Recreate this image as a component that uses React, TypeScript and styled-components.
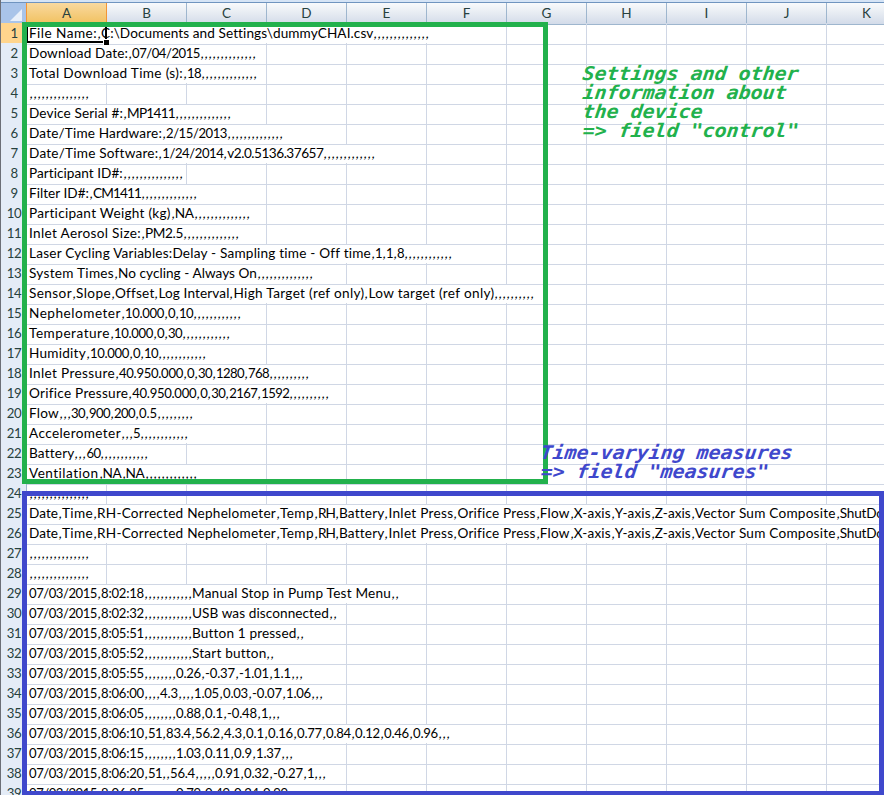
import React, { useLayoutEffect, useRef, useState } from 'react';
import styled, { createGlobalStyle } from 'styled-components';

const GlobalStyle = createGlobalStyle`
  html, body { margin: 0; padding: 0; overflow: hidden; background: #fff; }
`;

const COLUMNS = ['A', 'B', 'C', 'D', 'E', 'F', 'G', 'H', 'I', 'J', 'K'];
const COLUMN_WIDTH = 80;
const TEXT_INSET = 2;

type Token = { text: string; width: number };
type Part = string | [string, number];

const ADVANCE: Record<string, number> = { ',': 4, '.': 4, ':': 4, '/': 6, '-': 5 };

/* Plain strings hold digits and punctuation; words carry their own width. */
const toTokens = (parts: Part[]): Token[] =>
  parts.flatMap((part) => {
    if (typeof part !== 'string') return [{ text: part[0], width: part[1] }];
    return (part.match(/,+|[^,]+/g) ?? []).map((text) => ({
      text,
      width: [...text].reduce((sum, c) => sum + (ADVANCE[c] ?? 7), 0),
    }));
  });

const HEADINGS: Part[] = [
  ['Date', 29], ',', ['Time', 31], ',', ['RH-Corrected Nephelometer', 179], ',', ['Temp', 34], ',',
  ['RH', 17], ',', ['Battery', 45], ',', ['Inlet Press', 65], ',', ['Orifice Press', 78], ',',
  ['Flow', 30], ',', ['X-axis', 37], ',', ['Y-axis', 36], ',', ['Z-axis', 36], ',',
  ['Vector Sum Composite', 141], ',', ['ShutDown', 62],
];
const EMPTY_RECORD: Part[] = [',,,,,,,,,,,,,,,'];

const ROWS: Part[][] = [
  [['File Name:', 68], ',', ['C:\\Documents and Settings\\dummyCHAI.csv', 272], ',,,,,,,,,,,,,,'],
  [['Download Date:', 99], ',07/04/2015,,,,,,,,,,,,,,'],
  [['Total Download Time (s):', 154], ',18,,,,,,,,,,,,,,'],
  EMPTY_RECORD,
  [['Device Serial #:', 94], ',', ['MP1411', 48], ',,,,,,,,,,,,,,'],
  [['Date/Time Hardware:', 133], ',2/15/2013,,,,,,,,,,,,,,'],
  [['Date/Time Software:', 129], ',1/24/2014,', ['v2.0.5136.37657', 96], ',,,,,,,,,,,,,'],
  [['Participant ID#:', 94], ',,,,,,,,,,,,,,,'],
  [['Filter ID#:', 60], ',', ['CM1411', 48], ',,,,,,,,,,,,,,'],
  [['Participant Weight (kg)', 142], ',', ['NA', 19], ',,,,,,,,,,,,,,'],
  [['Inlet Aerosol Size:', 112], ',', ['PM2.5', 38], ',,,,,,,,,,,,,,'],
  [['Laser Cycling Variables:Delay - Sampling time - Off time', 342], ',1,1,8,,,,,,,,,,,,'],
  [['System Times', 85], ',', ['No cycling - Always On', 139], ',,,,,,,,,,,,,,'],
  [
    ['Sensor', 43], ',', ['Slope', 35], ',', ['Offset', 39], ',', ['Log Interval', 71], ',',
    ['High Target (ref only)', 131], ',', ['Low target (ref only)', 126], ',,,,,,,,,,',
  ],
  [['Nephelometer', 92], ',10.000,0,10,,,,,,,,,,,,'],
  [['Temperature', 81], ',10.000,0,30,,,,,,,,,,,,'],
  [['Humidity', 57], ',10.000,0,10,,,,,,,,,,,,'],
  [['Inlet Pressure', 86], ',40.950.000,0,30,1280,768,,,,,,,,,,'],
  [['Orifice Pressure', 99], ',40.950.000,0,30,2167,1592,,,,,,,,,,'],
  [['Flow', 30], ',,,30,900,200,0.5,,,,,,,,,'],
  [['Accelerometer', 92], ',,,5,,,,,,,,,,,,'],
  [['Battery', 45], ',,,60,,,,,,,,,,,,'],
  [['Ventilation', 70], ',', ['NA', 19], ',', ['NA', 19], ',,,,,,,,,,,,,'],
  EMPTY_RECORD,
  HEADINGS,
  HEADINGS,
  EMPTY_RECORD,
  EMPTY_RECORD,
  ['07/03/2015,8:02:18,,,,,,,,,,,,', ['Manual Stop in Pump Test Menu', 199], ',,'],
  ['07/03/2015,8:02:32,,,,,,,,,,,,', ['USB was disconnected', 137], ',,'],
  ['07/03/2015,8:05:51,,,,,,,,,,,,', ['Button 1 pressed', 104], ',,'],
  ['07/03/2015,8:05:52,,,,,,,,,,,,', ['Start button', 74], ',,'],
  ['07/03/2015,8:05:55,,,,,,,,0.26,-0.37,-1.01,1.1,,,'],
  ['07/03/2015,8:06:00,,,,4.3,,,,1.05,0.03,-0.07,1.06,,,'],
  ['07/03/2015,8:06:05,,,,,,,,0.88,0.1,-0.48,1,,,'],
  ['07/03/2015,8:06:10,51,83.4,56.2,4.3,0.1,0.16,0.77,0.84,0.12,0.46,0.96,,,'],
  ['07/03/2015,8:06:15,,,,,,,,1.03,0.11,0.9,1.37,,,'],
  ['07/03/2015,8:06:20,51,,56.4,,,,,0.91,0.32,-0.27,1,,,'],
  ['07/03/2015,8:06:25,,,,,,,,0.79,0.49,0.24,0.99,,,'],
];

const Window = styled.main`
  position: relative;
  width: 884px;
  height: 795px;
  overflow: hidden;
  box-sizing: border-box;
  background: #fff;
  border-left: 1px solid #6c6f77;
  font-family: Lato, "Open Sans", sans-serif;
  font-size: 13.2px;
  color: #000;
`;

const FormulaEdge = styled.div`
  height: 2px;
  background: #d5e4f6;
  border-bottom: 1px solid #6f94bf;
`;

const SheetRow = styled.div`
  display: grid;
  grid-template-columns: 26px repeat(11, ${COLUMN_WIDTH}px);
  height: 20px;
`;

const Corner = styled.div`
  display: flex;
  align-items: flex-end;
  justify-content: flex-end;
  box-sizing: border-box;
  padding: 0 4px 3px 0;
  background: #a9c4e9;
  border: solid #9eb6ce;
  border-width: 0 1px 1px 0;
  border-right-color: #f29536;
`;

const ColumnHeader = styled.div<{ $active: boolean }>`
  box-sizing: border-box;
  text-align: center;
  font-size: 13.5px;
  line-height: 21px;
  color: #27413e;
  background: ${(p) =>
    p.$active ? 'linear-gradient(#f9d99f, #f1c15f)' : 'linear-gradient(#f8fafc, #e6ebf2 50%, #d3dbe9)'};
  border: solid ${(p) => (p.$active ? '#f29536' : '#9eb6ce')};
  border-width: 0 1px 1px 0;
`;

const RowHeader = styled.div<{ $active: boolean }>`
  box-sizing: border-box;
  padding-left: 1px;
  text-align: center;
  line-height: 21px;
  letter-spacing: -0.5px;
  color: #27413e;
  background: ${(p) => (p.$active ? '#ffd58d' : '#e4ecf7')};
  border: solid ${(p) => (p.$active ? '#f29536' : '#9eb6ce')};
  border-width: 0 1px 1px 0;
`;

const Cell = styled.div<{ $span?: number }>`
  grid-column: span ${(p) => p.$span ?? 1};
  box-sizing: border-box;
  min-width: 0;
  border: solid #d0d7e5;
  border-width: 0 1px 1px 0;
`;

const TextCell = styled(Cell)`
  display: flex;
  align-items: baseline;
  padding-left: ${TEXT_INSET}px;
  line-height: 21px;
  white-space: pre;
`;

const TokenBox = styled.span<{ $kind: 'comma' | 'number' | 'word' }>`
  flex: none;
  font-size: ${(p) => (p.$kind === 'number' ? 13.1 : 13.6)}px;
  ${(p) => p.$kind === 'comma' && 'transform: translateX(0.5px) skewX(-8deg); transform-origin: 0 75%;'}
`;

const Frame = styled.div<{ $top: number; $width: number; $height: number; $color: string }>`
  position: absolute;
  left: 21px;
  top: ${(p) => p.$top}px;
  width: ${(p) => p.$width}px;
  height: ${(p) => p.$height}px;
  box-sizing: border-box;
  border: 5px solid ${(p) => p.$color};
`;

const Note = styled.div<{ $left: number; $top: number; $color: string }>`
  position: absolute;
  left: ${(p) => p.$left}px;
  top: ${(p) => p.$top}px;
  font: italic bold 20px/19px "DejaVu Sans Mono", monospace;
  letter-spacing: -0.04px;
  white-space: pre;
  color: ${(p) => p.$color};
`;

const NoteLine = styled.div`
  transform: skewX(-7deg) scaleY(0.94);
  transform-origin: 0 80%;
`;

const Selection = styled.div`
  position: absolute;
  left: 26px;
  top: 22px;
  width: 80px;
  height: 21px;
  box-sizing: border-box;
  border: solid #000;
  border-width: 0 2px 2px 1px;
`;

const FillHandle = styled.div`
  position: absolute;
  right: -4px;
  bottom: -4px;
  width: 5px;
  height: 5px;
  background: #000;
  border: solid #fff;
  border-width: 1px 0 0 1px;
`;

/* Tracks its letters so that the word takes exactly the given width. */
function Word({ text, width }: Token) {
  const ref = useRef<HTMLSpanElement>(null);
  const [spacing, setSpacing] = useState(0);
  const kind = text[0] === ',' ? 'comma' : /^[\d.:/-]+$/.test(text) ? 'number' : 'word';
  useLayoutEffect(() => {
    const natural = ref.current!.offsetWidth ? parseFloat(getComputedStyle(ref.current!).width) : 0;
    setSpacing((current) => (width - (natural - current * text.length)) / text.length);
  }, [text, width]);
  return (
    <TokenBox ref={ref} $kind={kind} style={{ letterSpacing: spacing }}>
      {text}
    </TokenBox>
  );
}

function DataRow({ index, parts }: { index: number; parts: Part[] }) {
  const tokens = toTokens(parts);
  const total = tokens.reduce((sum, t) => sum + t.width, TEXT_INSET);
  const span = Math.min(COLUMNS.length, Math.ceil(total / COLUMN_WIDTH));
  return (
    <SheetRow>
      <RowHeader $active={index === 0}>{index + 1}</RowHeader>
      <TextCell $span={span}>
        {tokens.map((t, i) => (
          <Word key={i} {...t} />
        ))}
      </TextCell>
      {COLUMNS.slice(span).map((c) => (
        <Cell key={c} />
      ))}
    </SheetRow>
  );
}

export default function App() {
  return (
    <>
      <GlobalStyle />
      <Window>
        <FormulaEdge />
        <SheetRow>
          <Corner>
            <svg width="12" height="12" viewBox="0 0 12 12">
              <path d="M12 0V12H0Z" fill="#e9f0fa" />
            </svg>
          </Corner>
          {COLUMNS.map((c) => (
            <ColumnHeader key={c} $active={c === 'A'}>
              {c}
            </ColumnHeader>
          ))}
        </SheetRow>
        {ROWS.map((parts, i) => (
          <DataRow key={i} index={i} parts={parts} />
        ))}
        <Selection>
          <FillHandle />
        </Selection>
        <Frame $top={22} $width={526} $height={462} $color="#22b14c" />
        <Frame $top={491} $width={862} $height={305} $color="#3f48cc" />
        <Note $left={581} $top={64} $color="#22b14c">
          <NoteLine>Settings and other</NoteLine>
          <NoteLine>information about</NoteLine>
          <NoteLine>the device</NoteLine>
          <NoteLine>{'=> field "control"'}</NoteLine>
        </Note>
        <Note $left={539} $top={443} $color="#3f48cc">
          <NoteLine>Time-varying measures</NoteLine>
          <NoteLine>{'=> field "measures"'}</NoteLine>
        </Note>
      </Window>
    </>
  );
}
